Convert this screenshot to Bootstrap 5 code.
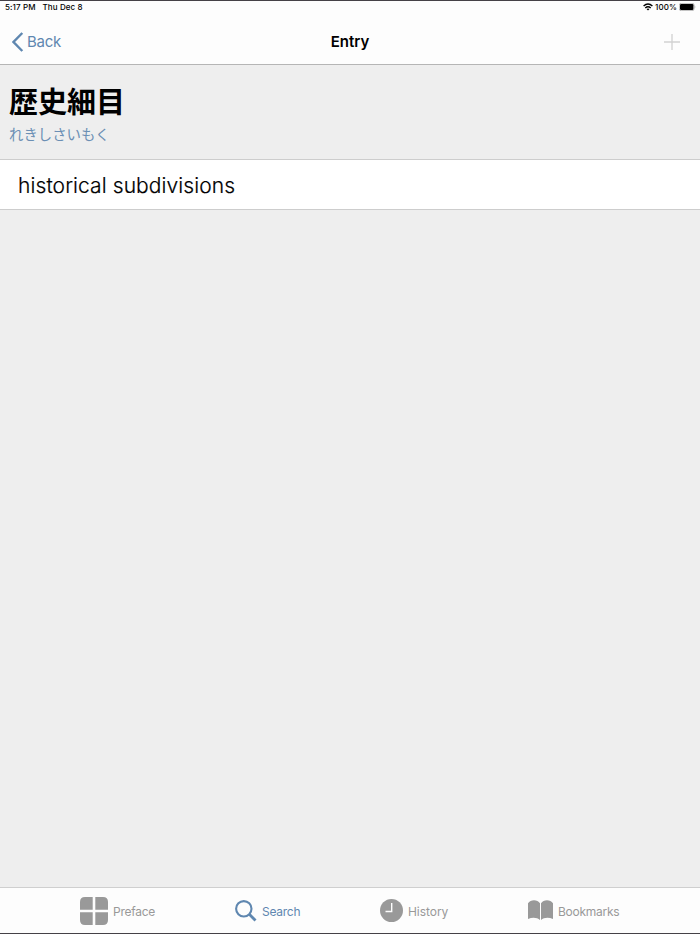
<!DOCTYPE html>
<html lang="en">
<head>
  <meta charset="UTF-8" />
  <meta name="viewport" content="width=device-width, initial-scale=1.0"/>
  <title>Entry</title>
  <link href="https://cdn.jsdelivr.net/npm/bootstrap@5.3.0/dist/css/bootstrap.min.css" rel="stylesheet"/>
  <style>
    body {
      height: 934px;
      overflow: hidden;
      background: #eee;
      color: #000;
      font-family: Inter, "Liberation Sans", sans-serif;
      line-height: 1;
      border-top: 1px solid #454147;
      border-bottom: 1px solid #454147;
    }
    svg {
      display: block;
      flex-shrink: 0;
    }
    .top-area {
      height: 64px;
      background: #fdfdfd;
      border-bottom: 1px solid #b5b5b5;
    }
    .status-bar {
      height: 12px;
      padding: 0 4px 0 5px;
      font-size: 8px;
      font-weight: 500;
      letter-spacing: .1px;
    }
    .nav-row {
      height: 51px;
      padding: 6px 12px 0;
      font-size: 15px;
    }
    .back-link {
      color: #5f87b0;
      text-decoration: none;
      letter-spacing: -.3px;
    }
    .nav-title {
      font-weight: 600;
      font-size: 15px;
    }
    .headword {
      height: 94px;
      padding: 19px 9px 0;
      font-family: "Noto Sans CJK JP", sans-serif;
    }
    .headword h1 {
      font-size: 29px;
      line-height: 32px;
      font-weight: 700;
      margin: 0;
    }
    .reading {
      font-size: 14.4px;
      line-height: 20px;
      color: #6b8fb4;
      margin: 8px 0 0;
    }
    .meaning {
      height: 51px;
      padding: 2px 18px 0;
      background: #fff;
      border-top: 1px solid #cdcdcd;
      border-bottom: 1px solid #cdcdcd;
      font-size: 21px;
      font-weight: 300;
      letter-spacing: .1px;
      -webkit-text-stroke: .2px #000;
    }
    .tab-bar {
      height: 46px;
      padding-left: 80px;
      gap: 80px;
      background: #fdfdfd;
      border-top: 1px solid #cfcfcf;
      font-size: 12px;
      letter-spacing: -.25px;
    }
    .tab-bar a {
      color: #999;
      text-decoration: none;
      white-space: nowrap;
    }
    .tab-bar a.active {
      color: #5f87b0;
    }
    .tab-bar span {
      padding-top: 2px;
    }
  </style>
</head>
<body class="d-flex flex-column">

<header class="top-area">
  <div class="status-bar d-flex align-items-center justify-content-between">
    <div class="d-flex" style="gap: 7px"><span>5:17 PM</span><span>Thu Dec 8</span></div>
    <div class="d-flex align-items-center" style="gap: 2px">
      <svg width="10" height="8" viewBox="0 0 10 8" fill="none" stroke="#000" stroke-width="1.4">
        <path d="M.6 3.1Q5-1.1 9.4 3.1M2.3 5Q5 2.5 7.7 5"/>
        <path d="M5 7.6 3.5 6.1Q5 5 6.5 6.1Z" fill="#000" stroke="none"/>
      </svg>
      <span>100%</span>
      <svg width="17" height="8" viewBox="0 0 17 8">
        <rect x=".3" y=".3" width="14.8" height="7.4" rx="2" fill="none" stroke="#888" stroke-width=".6"/>
        <rect x="1" y="1" width="13.4" height="6" rx="1.2"/>
        <path d="M15.8 2.7q1.2 1.3 0 2.6z" fill="#888"/>
      </svg>
    </div>
  </div>
  <nav class="nav-row row g-0 align-items-center">
    <div class="col d-flex">
      <a class="back-link d-flex align-items-center" href="#">
        <svg width="12" height="20" viewBox="0 0 12 20" fill="none" stroke="currentColor" stroke-width="2.4"><path d="M10.3 1 1.5 10l8.8 9"/></svg>
        <span style="margin-left: 3px">Back</span>
      </a>
    </div>
    <div class="col-auto nav-title">Entry</div>
    <div class="col d-flex justify-content-end">
      <svg class="me-2" width="16" height="16" viewBox="0 0 16 16" stroke="#d2d2d2" stroke-width="1.3"><path d="M8 0v16M0 8h16"/></svg>
    </div>
  </nav>
</header>

<main class="flex-grow-1">
  <section class="headword" lang="ja">
    <h1>歴史細目</h1>
    <p class="reading">れきしさいもく</p>
  </section>
  <div class="meaning d-flex align-items-center">historical subdivisions</div>
</main>

<footer class="tab-bar d-flex align-items-center">
  <a class="d-flex align-items-center" style="width: 75px; gap: 5px" href="#">
    <svg width="28" height="28" viewBox="0 0 28 28" fill="currentColor">
      <path d="M5 0H12.7V12.7H0V5Q0 0 5 0ZM15.3 0H23Q28 0 28 5V12.7H15.3ZM0 15.3H12.7V28H5Q0 28 0 23ZM15.3 15.3H28V23Q28 28 23 28H15.3Z"/>
    </svg>
    <span>Preface</span>
  </a>
  <a class="active d-flex align-items-center" style="width: 65px; gap: 5px" href="#">
    <svg width="22" height="22" viewBox="0 0 22 22" fill="none" stroke="currentColor">
      <circle cx="8.8" cy="8.8" r="7.7" stroke-width="2.1"/>
      <path d="m14.3 14.3 6.2 6.2" stroke-width="2.8"/>
    </svg>
    <span>Search</span>
  </a>
  <a class="d-flex align-items-center" style="width: 68px; gap: 5px" href="#">
    <svg width="23" height="23" viewBox="0 0 23 23">
      <circle cx="11.5" cy="11.5" r="11.5" fill="currentColor"/>
      <path d="M11.7 4v8.5H5.5" fill="none" stroke="#fdfdfd" stroke-width="1.4"/>
    </svg>
    <span style="letter-spacing: -.05px">History</span>
  </a>
  <a class="d-flex align-items-center" style="width: 91px; gap: 5px" href="#">
    <svg width="25" height="21" viewBox="0 0 25 21" fill="currentColor">
      <path d="M0 3.2C2.5-.8 9.5-.8 12 3.2V20C9 17.2 4 17.2 0 19ZM13 3.2C15.500-.8 22.500-.8 25 3.200V19C21 17.200 16 17.200 13 20Z"/>
    </svg>
    <span>Bookmarks</span>
  </a>
</footer>

<script src="https://cdn.jsdelivr.net/npm/bootstrap@5.3.0/dist/js/bootstrap.bundle.min.js"></script>
</body>
</html>
